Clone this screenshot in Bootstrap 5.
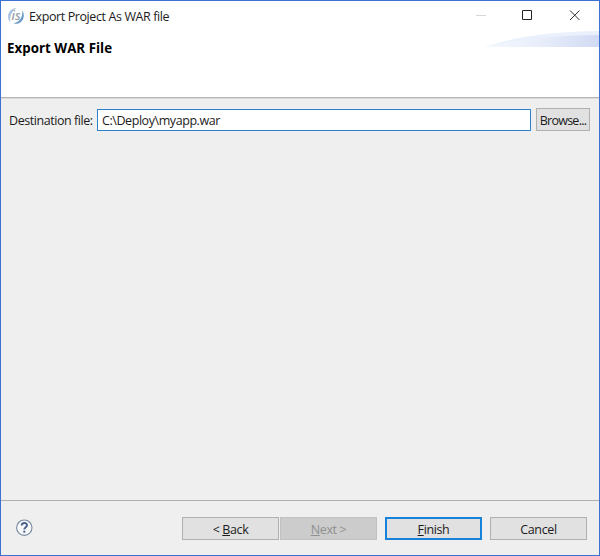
<!DOCTYPE html>
<html lang="en">
<head>
<meta charset="utf-8">
<meta name="viewport" content="width=device-width, initial-scale=1">
<title>Export Project As WAR file</title>
<link href="https://cdn.jsdelivr.net/npm/bootstrap@5.3.0/dist/css/bootstrap.min.css" rel="stylesheet">
<style>
body { font: 12.5px/18px "Open Sans", "Noto Sans", sans-serif; color: #1c1c1c; }
.dialog { width: 600px; height: 556px; background: #efefef; border: 1px solid #3c72cf; }
.dialog-head { height: 97px; border-bottom: 1px solid #b5b5b5; box-shadow: 0 1px #dadada; }
.titlebar { height: 30px; padding-left: 6px; }
.app-icon { margin-right: 4px; }
.caption-text { letter-spacing: -.4px; padding-top: 2px; }
.win-btn { width: 48px; height: 30px; padding: 0; border: 0; background: none; }
.win-group { margin-right: -1px; }
.heading { font-size: 13.3px; line-height: 18px; font-weight: 700; color: #000; margin: 8px 0 0 6px; letter-spacing: .03px; }
.field-row { padding: 10px 8px 0; height: 33px; }
.field-label { width: 88px; letter-spacing: -.44px; padding-top: 3px; }
.path-input { width: 434px; height: 22px; padding: 2px 4px 0; font-size: 12.5px; line-height: 18px; color: #1c1c1c; border: 1px solid #2b83cd; letter-spacing: -.43px; }
.path-input:focus { box-shadow: none; }
.dlg-btn { --bs-btn-bg: #e1e1e1; --bs-btn-border-color: #b0b0b0; --bs-btn-color: #1c1c1c;
  --bs-btn-disabled-bg: #cccccc; --bs-btn-disabled-border-color: #c1c1c1; --bs-btn-disabled-color: #909090; --bs-btn-disabled-opacity: 1;
  width: 97px; height: 23px; padding: 2px 0 0; font-size: 12.5px; line-height: 19px; letter-spacing: -.38px; }
.dlg-btn u { text-underline-offset: 1px; text-decoration-thickness: 1px; }
.browse-btn { width: 54px; margin-left: 5px; letter-spacing: -.75px; }
.back-btn { margin-right: 1px; }
.default-btn { --bs-btn-border-color: #1682da; border-width: 2px; line-height: 17px; margin: 0 8px; }
.dialog-foot { height: 55px; border-top: 1px solid #b0b0b0; padding: 16px 12px 0 14px; }
.help-btn { width: 18px; height: 18px; margin-top: 2px; }
</style>
<script src="https://cdn.jsdelivr.net/npm/bootstrap@5.3.0/dist/js/bootstrap.bundle.min.js"></script>
</head>
<body>
<main class="dialog d-flex flex-column overflow-hidden">
  <header class="dialog-head bg-white flex-shrink-0">
    <div class="titlebar d-flex align-items-center">
      <svg class="app-icon" width="18" height="18" viewBox="0 0 18 18" aria-hidden="true">
        <path d="M9.500 1C3.500 1.500 .5 6 1.200 10.500C1.400 12.500 2 14 3.200 15C2.800 9 4.500 4.500 9.500 1Z" fill="#a9c3e0"/>
        <path d="M15.300 3.500C16 10 12.500 15 6.500 16.500C12 18 16.800 14 16.800 8.500C16.800 6.500 16.300 4.700 15.300 3.500Z" fill="#6d9ccc"/>
        <text x="4.600" y="13" font-size="12" font-style="italic" font-weight="600" fill="#9aa1aa" textLength="9" lengthAdjust="spacingAndGlyphs">is</text>
      </svg>
      <span class="caption-text">Export Project As WAR file</span>
      <div class="win-group d-flex ms-auto">
        <button class="win-btn" aria-label="Minimize" disabled><svg class="d-block" width="48" height="30"><path d="M20 14.500h10" stroke="#d8d8d8"/></svg></button>
        <button class="win-btn" aria-label="Maximize"><svg class="d-block" width="48" height="30"><path d="M18.500 9.500h9v9h-9z" fill="none" stroke="#222"/></svg></button>
        <button class="win-btn" aria-label="Close"><svg class="d-block" width="48" height="30"><path d="M18 9.500l9.500 9.500M27.500 9.500l-9.500 9.500" stroke="#333"/></svg></button>
      </div>
    </div>
    <div class="d-flex justify-content-between align-items-start">
      <h1 class="heading">Export WAR File</h1>
      <svg width="114" height="16" viewBox="0 0 114 16" aria-hidden="true">
        <defs><linearGradient id="swoosh"><stop stop-color="#f5f8fe"/><stop offset=".5" stop-color="#e8edfa"/><stop offset="1" stop-color="#d0daf3"/></linearGradient></defs>
        <path d="M0 16C24 7 68 0 114 0V16Z" fill="#ebf1fc"/>
        <path d="M0 16C28 9 70 4 114 4V16Z" fill="url(#swoosh)"/>
      </svg>
    </div>
  </header>
  <section class="flex-grow-1">
    <div class="field-row d-flex align-items-center">
      <label class="field-label text-nowrap" for="dest">Destination file:</label>
      <input class="form-control path-input rounded-0" id="dest" type="text" value="C:\Deploy\myapp.war">
      <button class="btn dlg-btn browse-btn rounded-0">Browse...</button>
    </div>
  </section>
  <footer class="dialog-foot d-flex align-items-start flex-shrink-0">
    <svg class="help-btn" viewBox="0 0 18 18" role="img" aria-label="Help">
      <circle cx="9.300" cy="8.700" r="7.700" fill="#f7f8fa" stroke="#7889a0" stroke-width="1.100"/>
      <path d="M6.700 6.500C6.700 3.200 12 3.200 12 6.300C12 8.300 9.300 8.200 9.300 10.500" fill="none" stroke="#4d628a" stroke-width="1.900"/>
      <path d="M8.300 11.700h2v2h-2z" fill="#4d628a"/>
    </svg>
    <div class="d-flex ms-auto">
      <button class="btn dlg-btn back-btn rounded-0">&lt; <u>B</u>ack</button>
      <button class="btn dlg-btn rounded-0" disabled><u>N</u>ext &gt;</button>
      <button class="btn dlg-btn default-btn rounded-0"><u>F</u>inish</button>
      <button class="btn dlg-btn rounded-0">Cancel</button>
    </div>
  </footer>
</main>
</body>
</html>
